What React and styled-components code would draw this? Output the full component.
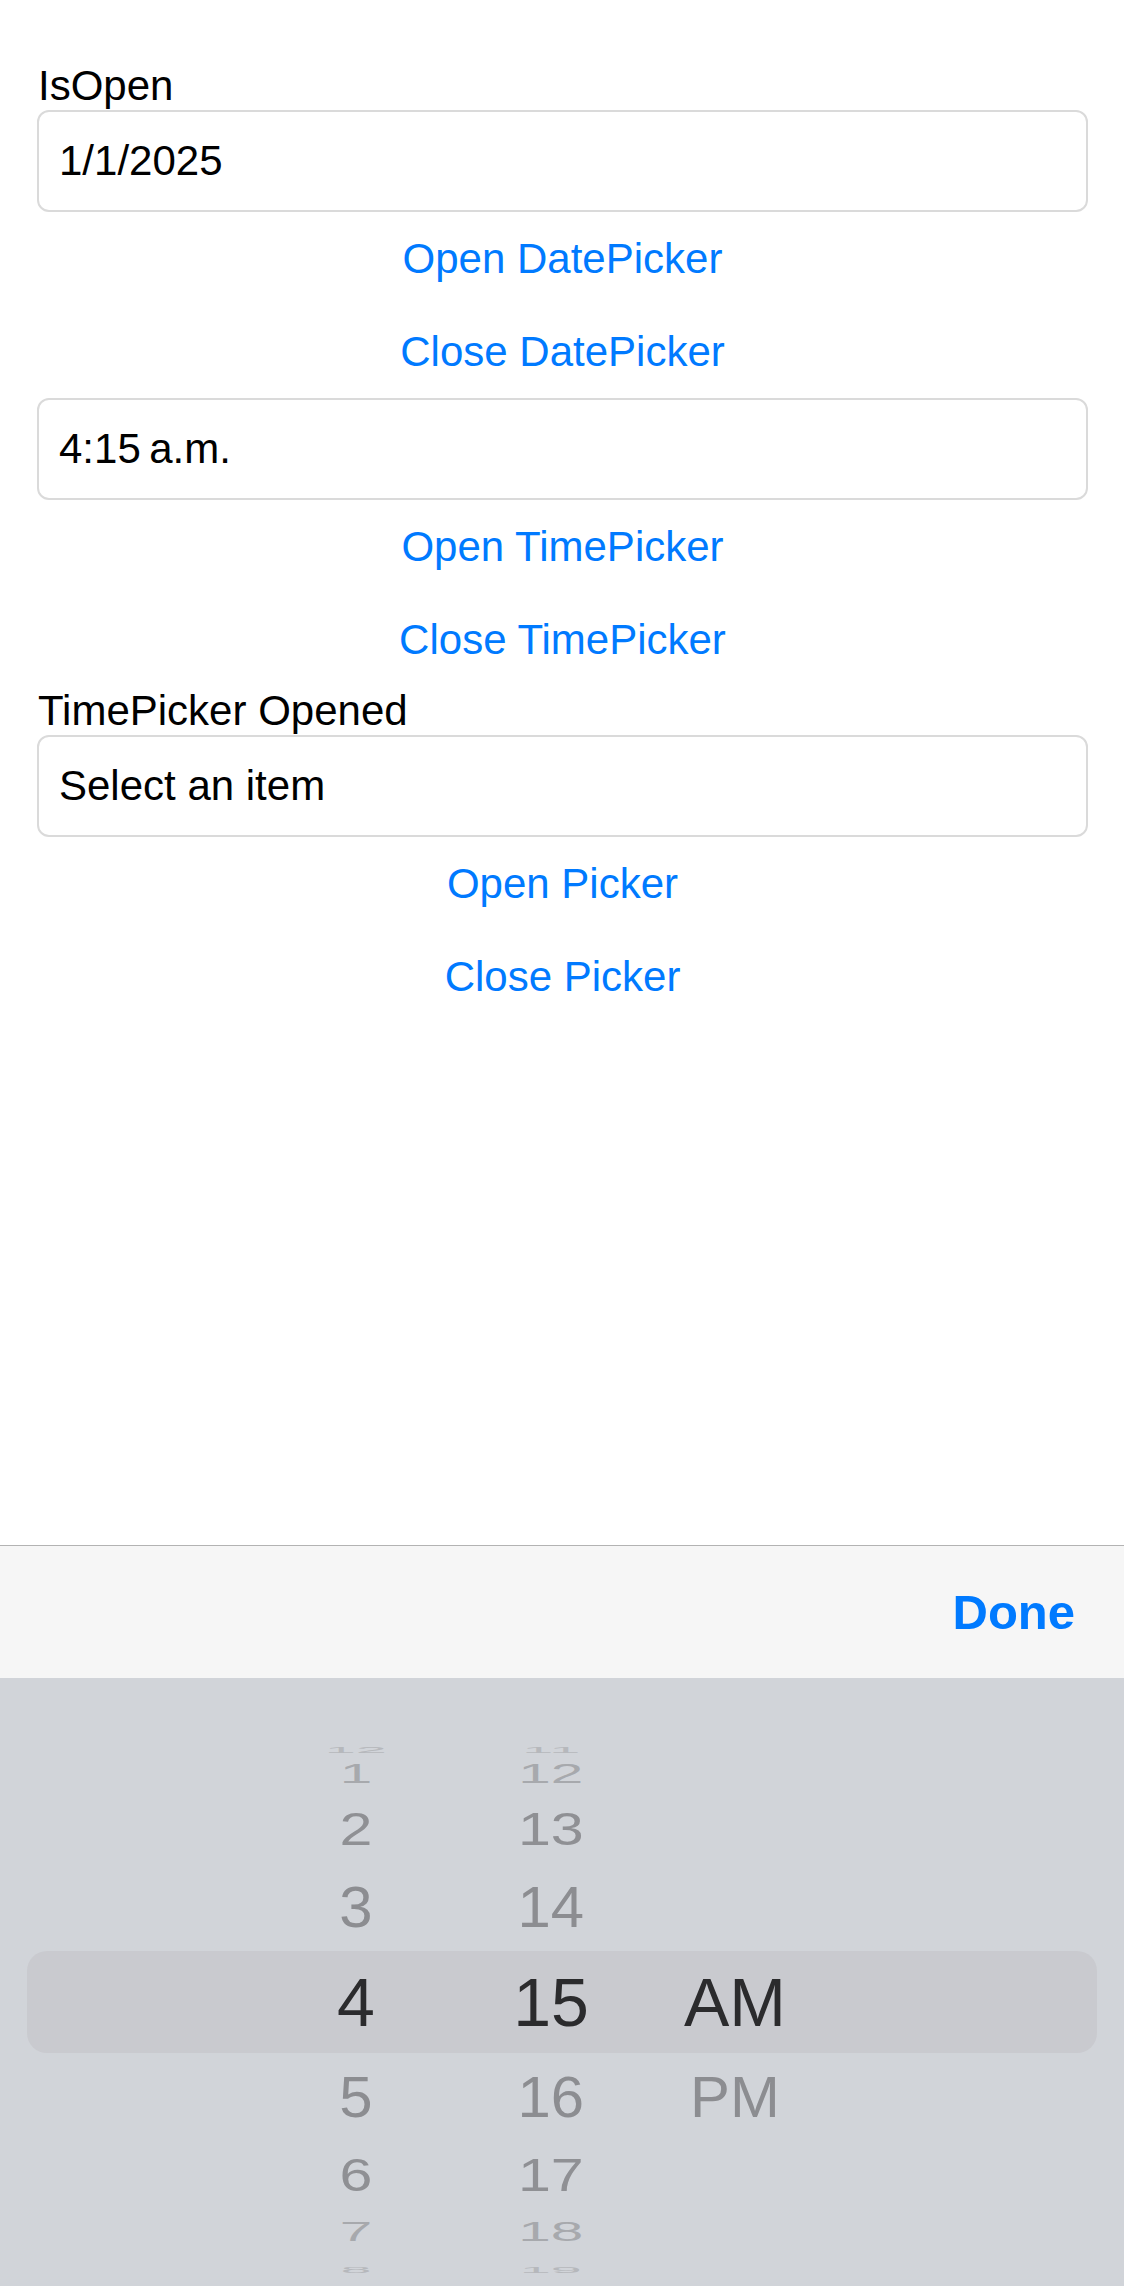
import React from 'react';
import styled, { createGlobalStyle } from 'styled-components';

const GlobalStyle = createGlobalStyle`
    html, body {
        margin: 0;
        padding: 0;
        background: #ffffff;
    }
    body {
        font-family: "Liberation Sans", Arial, sans-serif;
        -webkit-font-smoothing: antialiased;
    }
`

const Screen = styled.div`
    display: flex;
    flex-direction: column;
    height: 100vh;
    overflow: hidden;
`

const Content = styled.div`
    flex: 1;
    display: flex;
    flex-direction: column;
    padding: 61px 36px 0 37px;
`

const Label = styled.div`
    font-size: 42px;
    line-height: 49px;
    color: #000;
    padding-left: 1px;
`

const Entry = styled.div`
    box-sizing: border-box;
    height: 102px;
    display: flex;
    align-items: center;
    padding: 0 20px;
    border: 2px solid #dadada;
    border-radius: 12px;
    font-size: 42px;
    color: #000;
`

const LinkButton = styled.button`
    display: block;
    width: 100%;
    height: 93px;
    padding: 0;
    border: none;
    background: transparent;
    font-family: inherit;
    font-size: 42px;
    color: #007aff;
    text-align: center;
    cursor: pointer;
`

const Toolbar = styled.div`
    box-sizing: border-box;
    height: 133px;
    flex-shrink: 0;
    display: flex;
    align-items: center;
    justify-content: flex-end;
    padding-right: 49px;
    background: #f6f6f6;
    border-top: 1px solid #b3b3b3;
`

const DoneButton = styled.button`
    border: none;
    background: transparent;
    padding: 0;
    font-family: inherit;
    font-size: 49px;
    font-weight: 700;
    color: #007aff;
    cursor: pointer;
`

const Picker = styled.div`
    height: 608px;
    flex-shrink: 0;
    background: #d1d4d9;
    padding-top: 55px;
    box-sizing: border-box;
    overflow: hidden;
`

const WheelRow = styled.div`
    height: ${p => p.$height}px;
    display: grid;
    grid-template-columns: 160px 230px 138px;
    align-items: center;
    margin: 0 ${p => p.$selected ? 27 : 0}px;
    padding-left: ${p => p.$selected ? 249 : 276}px;
    background: ${p => p.$selected ? '#c9cacf' : 'transparent'};
    border-radius: ${p => p.$selected ? 20 : 0}px;
`

const Cell = styled.div`
    display: flex;
    justify-content: center;
    align-items: center;
    height: 100%;
`

const CellText = styled.span`
    display: inline-block;
    font-size: 68px;
    line-height: 0.5;
    color: ${p => p.$color};
    transform: scale(${p => p.$sx}, ${p => p.$sy});
    white-space: nowrap;
`

// how each ring of the wheel looks, by distance from the selected row
const ring = {
    0: { height: 102, sx: 1, sy: 1, color: '#2b2b2d' },
    1: { height: 88, sx: 0.88, sy: 0.85, color: '#8c8d91' },
    2: { height: 68, sx: 0.87, sy: 0.68, color: '#8f9094' },
    3: { height: 44, sx: 0.86, sy: 0.42, color: '#a7a9ad' },
    4: { height: 18, sx: 0.82, sy: 0.13, color: '#b6b8bc' },
}

const rows = [
    ['12', '11', ''],
    ['1', '12', ''],
    ['2', '13', ''],
    ['3', '14', ''],
    ['4', '15', 'AM'],
    ['5', '16', 'PM'],
    ['6', '17', ''],
    ['7', '18', ''],
    ['8', '19', ''],
]

function TimeWheel() {
    return <Picker>
        {rows.map((cells, i) => {
            const d = Math.abs(i - 4)
            const r = ring[d]
            return <WheelRow key={i} $height={r.height} $selected={d === 0}>
                {cells.map((c, j) => (
                    <Cell key={j}>
                        {c && <CellText $color={r.color} $sx={r.sx} $sy={r.sy}>{c}</CellText>}
                    </Cell>
                ))}
            </WheelRow>
        })}
    </Picker>
}

export default function App() {
    return <Screen>
        <GlobalStyle/>
        <Content>
            <Label>IsOpen</Label>
            <Entry>1/1/2025</Entry>
            <LinkButton>Open DatePicker</LinkButton>
            <LinkButton>Close DatePicker</LinkButton>

            <Entry>4:15{'\u202F'}a.m.</Entry>
            <LinkButton>Open TimePicker</LinkButton>
            <LinkButton>Close TimePicker</LinkButton>

            <Label>TimePicker Opened</Label>
            <Entry>Select an item</Entry>
            <LinkButton>Open Picker</LinkButton>
            <LinkButton>Close Picker</LinkButton>
        </Content>

        <Toolbar>
            <DoneButton>Done</DoneButton>
        </Toolbar>
        <TimeWheel/>
    </Screen>
}
